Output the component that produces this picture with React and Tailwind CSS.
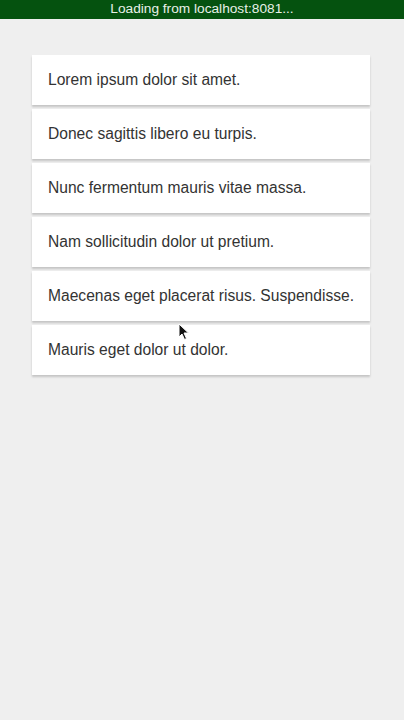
export default function App() {
  const items = [
    "Lorem ipsum dolor sit amet.",
    "Donec sagittis libero eu turpis.",
    "Nunc fermentum mauris vitae massa.",
    "Nam sollicitudin dolor ut pretium.",
    "Maecenas eget placerat risus. Suspendisse.",
    "Mauris eget dolor ut dolor.",
  ];

  return (
    <div
      className="relative min-h-[720px] w-[404px] bg-[#efefef]"
      style={{ fontFamily: "'Liberation Sans', Arial, sans-serif" }}
    >
      <div className="flex h-[19px] items-center justify-center bg-[#05520f] text-[13.7px] text-[#e8f0e8]">
        Loading from localhost:8081...
      </div>

      <div className="flex flex-col gap-[4px] pl-[32px] pr-[34px] pt-[36px]">
        {items.map((text) => (
          <div
            key={text}
            className="flex h-[50px] items-center bg-white px-[16px] text-[15.6px] text-[#333] shadow-[0_2px_2px_rgba(0,0,0,0.18)]"
          >
            {text}
          </div>
        ))}
      </div>

      {/* mouse cursor */}
      <svg
        className="absolute left-[178px] top-[323px]"
        width="12"
        height="18"
        viewBox="0 0 12 18"
      >
        <path
          d="M1 1 L1 14 L4 11 L6.5 16.5 L8.5 15.5 L6 10 L10.5 10 Z"
          fill="#111"
          stroke="#fff"
          strokeWidth="1"
        />
      </svg>
    </div>
  );
}
